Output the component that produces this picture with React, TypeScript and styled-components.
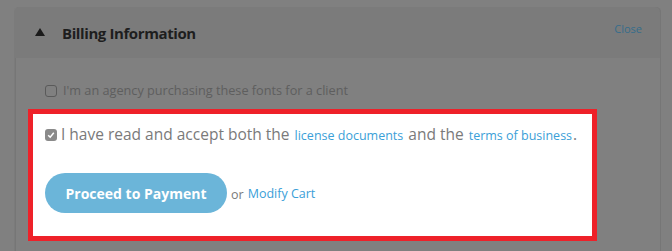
import React from "react";
import styled, { createGlobalStyle } from "styled-components";

const Global = createGlobalStyle`
  html, body {
    margin: 0;
    padding: 0;
    background: #808080;
    font-family: "Open Sans", "Noto Sans", sans-serif;
  }
`;

const Page = styled.div`
  height: 251px;
  padding: 7px 11px 0 14px;
  box-sizing: border-box;
  overflow: hidden;
`;

const Card = styled.section`
  width: 647px;
  height: 244px;
  display: flex;
  flex-direction: column;
  border-radius: 5px 5px 0 0;
  background: #7b7b7b;
  box-shadow: inset -1px 0 0 #767676;
`;

const Header = styled.header`
  height: 51px;
  display: flex;
  align-items: center;
  padding: 0 19px 0 21px;
  box-sizing: border-box;
`;

const Caret = styled.span`
  width: 0;
  height: 0;
  border-left: 5px solid transparent;
  border-right: 5px solid transparent;
  border-bottom: 8px solid #1a1a1a;
  margin-right: 17px;
  margin-top: -2px;
`;

const Title = styled.h2`
  margin: 0;
  font-size: 15px;
  letter-spacing: -0.4px;
  font-weight: 700;
  color: #1e1e1e;
  flex: 1;
`;

const Close = styled.a`
  font-size: 11px;
  color: #356d8b;
  margin-top: -8px;
  cursor: pointer;
`;

const Body = styled.div`
  flex: 1;
  background: #808080;
  margin-left: 1px;
  border-left: 1px solid #767676;
  margin-right: 1px;
  padding: 24px 0 0 13px;
`;

const Row = styled.label<{ $dim?: boolean }>`
  display: flex;
  align-items: center;
  gap: ${(p) => (p.$dim ? "6px" : "4px")};
  line-height: ${(p) => (p.$dim ? "17px" : "20px")};
  color: ${(p) => (p.$dim ? "#5e5e5e" : "#7a7a7a")};
  font-size: ${(p) => (p.$dim ? "12.7px" : "15.5px")};
  padding-left: ${(p) => (p.$dim ? "16px" : "12px")};
`;

const Box = styled.span<{ $checked?: boolean }>`
  width: 12px;
  height: 12px;
  box-sizing: border-box;
  border-radius: 3px;
  display: inline-flex;
  align-items: center;
  justify-content: center;
  flex-shrink: 0;
  border: ${(p) => (p.$checked ? "none" : "1.5px solid #5a5a5a")};
  background: ${(p) => (p.$checked ? "#8a8a8a" : "transparent")};
`;

const Highlight = styled.div`
  width: 569px;
  height: 132px;
  box-sizing: border-box;
  margin: 10px 0 0 -1px;
  border: 5px solid #ee2129;
  background: #fff;
  padding-top: 10px;
`;

const Link = styled.a`
  color: #3aa0d8;
  font-size: 12.5px;
  margin: 0 1px;
`;

const Actions = styled.div`
  display: flex;
  align-items: center;
  gap: 4px;
  margin: 27px 0 0 12px;
  font-size: 12.5px;
  color: #7a7a7a;
`;

const Or = styled.span`
  margin-top: 2px;
  margin-right: -1px;
`;

const PayButton = styled.button`
  height: 40px;
  width: 182px;
  border: none;
  border-radius: 20px;
  background: #6bb5d9;
  color: #fff;
  font-family: inherit;
  font-size: 14px;
  font-weight: 700;
  cursor: pointer;
`;

const Check = () => (
  <svg width="8" height="8" viewBox="0 0 8 8">
    <path d="M1.2 4.2 L3.2 6.2 L6.8 1.8" fill="none" stroke="#fff" strokeWidth="1.5" />
  </svg>
);

export default function App() {
  return (
    <>
      <Global />
      <Page>
        <Card>
          <Header>
            <Caret />
            <Title>Billing Information</Title>
            <Close>Close</Close>
          </Header>
          <Body>
            <Row $dim>
              <Box />
              I'm an agency purchasing these fonts for a client
            </Row>
            <Highlight>
              <Row>
                <Box $checked>
                  <Check />
                </Box>
                <span>
                  I have read and accept both the <Link>license documents</Link> and the{" "}
                  <Link>terms of business</Link>.
                </span>
              </Row>
              <Actions>
                <PayButton>Proceed to Payment</PayButton>
                <Or>or</Or>
                <Link>Modify Cart</Link>
              </Actions>
            </Highlight>
          </Body>
        </Card>
      </Page>
    </>
  );
}
